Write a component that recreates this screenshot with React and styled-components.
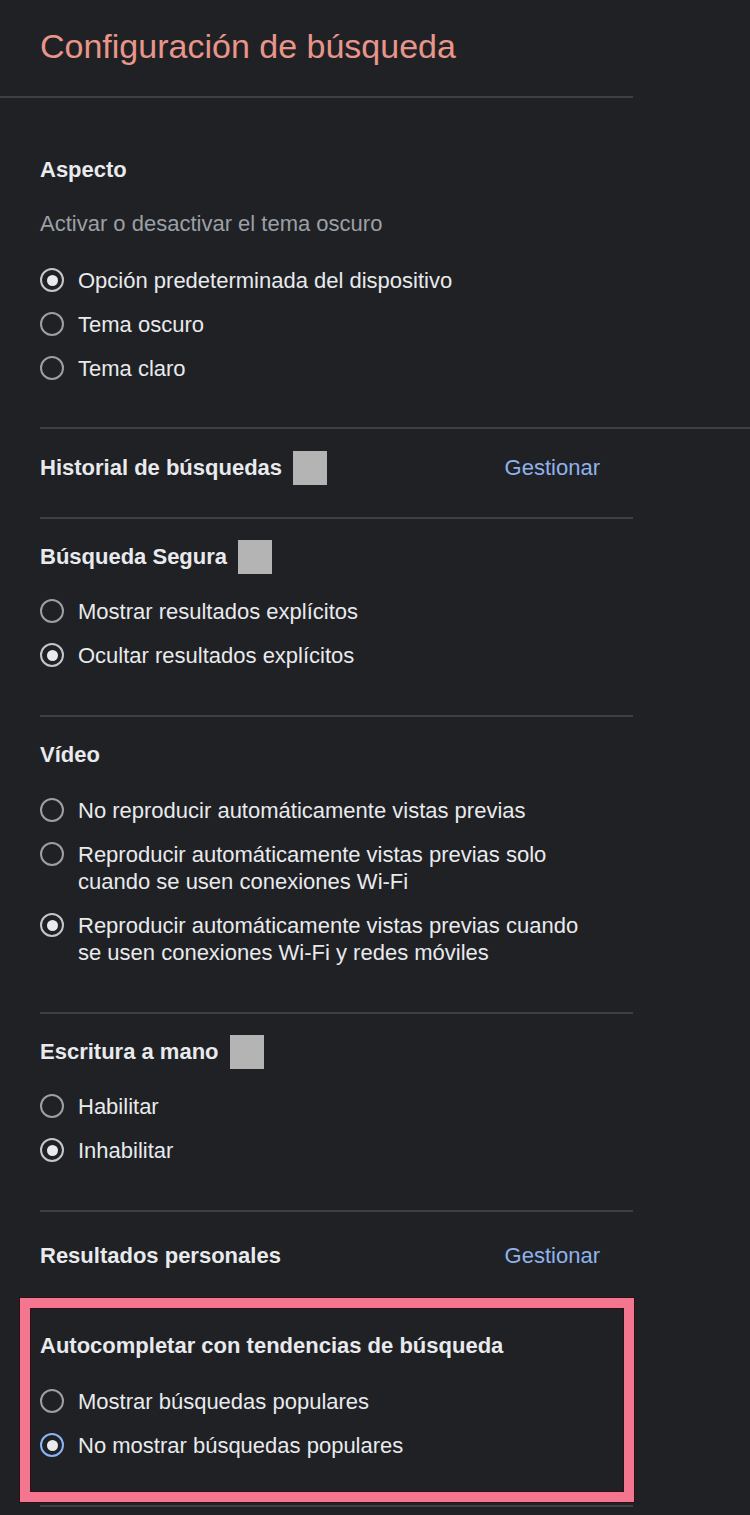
import React from "react";
import styled, { createGlobalStyle } from "styled-components";

const GlobalStyle = createGlobalStyle`
  html, body {
    margin: 0;
    padding: 0;
    background: #202124;
  }
  body {
    font-family: "Liberation Sans", Arial, sans-serif;
    color: #e8eaed;
  }
  #root {
    min-height: 1515px;
    background: #202124;
  }
  * { box-sizing: border-box; }
`;

const Page = styled.div`
  width: 633px;
  overflow: visible;
`;

const Header = styled.header`
  height: 96px;
  padding: 26px 0 0 40px;
`;

const Title = styled.h1`
  margin: 0;
  font-size: 34px;
  line-height: 40px;
  font-weight: 400;
  color: #e8958a;
`;

const Divider = styled.hr`
  margin: ${(p) => (p.$inset ? "0 0 0 40px" : "0")};
  margin-top: ${(p) => p.$mt || 0}px;
  margin-right: ${(p) => (p.$wide ? "-117px" : "0")};
  border: 0;
  height: 2px;
  background: #3c4043;
`;

const Content = styled.main`
  padding-left: 40px;
`;

const Section = styled.section`
  padding-top: ${(p) => p.$top}px;
  padding-bottom: ${(p) => p.$bottom}px;
`;

const HeadingRow = styled.div`
  display: flex;
  align-items: center;
  justify-content: ${(p) => (p.$spread ? "space-between" : "flex-start")};
  gap: 11px;
  min-height: 34px;
  padding-right: ${(p) => (p.$spread ? "33px" : "0")};
`;

const Heading = styled.h2`
  margin: 0;
  font-size: 22px;
  line-height: 28px;
  font-weight: 700;
  color: #e8eaed;
`;

const Placeholder = styled.span`
  display: inline-block;
  width: 34px;
  height: 34px;
  background: #b4b4b4;
`;

const ManageLink = styled.a`
  font-size: 22px;
  line-height: 28px;
  color: #8fb2ec;
  text-decoration: none;
  cursor: pointer;
`;

const Subtitle = styled.p`
  margin: 23px 0 0;
  font-size: 22px;
  line-height: 28px;
  color: #9aa0a6;
`;

const OptionList = styled.div`
  display: flex;
  flex-direction: column;
  margin-top: ${(p) => p.$mt}px;
`;

const Option = styled.label`
  display: flex;
  align-items: flex-start;
  gap: 14px;
  padding: 8.5px 0;
  cursor: pointer;
`;

const Radio = styled.span`
  flex: none;
  width: 24px;
  height: 24px;
  margin-top: 1.5px;
  border-radius: 50%;
  border: 2px solid ${(p) => (p.$focus ? "#8ab4f8" : p.$checked ? "#c4c7ca" : "#9aa0a6")};
  display: flex;
  align-items: center;
  justify-content: center;

  &::after {
    content: "";
    width: 11px;
    height: 11px;
    border-radius: 50%;
    background: #e8eaed;
    display: ${(p) => (p.$checked ? "block" : "none")};
  }
`;

const OptionText = styled.span`
  font-size: 22px;
  line-height: 27px;
  color: #e8eaed;
  max-width: 512px;
`;

const Highlight = styled.section`
  margin-left: -20px;
  width: 614px;
  border: 10px solid #f4758f;
  box-shadow: 0 0 0 1px rgba(60, 0, 10, 0.5), inset 0 0 0 1px rgba(60, 0, 10, 0.5);
  padding: 21px 0 25px 10px;
`;

function RadioGroup({ options, checked, mt = 15, focus }) {
  return (
    <OptionList $mt={mt} role="radiogroup">
      {options.map((o, i) => (
        <Option key={o}>
          <Radio $checked={i === checked} $focus={focus && i === checked} />
          <OptionText>{o}</OptionText>
        </Option>
      ))}
    </OptionList>
  );
}

export default function App() {
  return (
    <>
      <GlobalStyle />
      <Page>
        <Header>
          <Title>Configuración de búsqueda</Title>
        </Header>
        <Divider />
        <Content>
          <Section $top={55} $bottom={37}>
            <HeadingRow>
              <Heading>Aspecto</Heading>
            </HeadingRow>
            <Subtitle>Activar o desactivar el tema oscuro</Subtitle>
            <RadioGroup
              mt={20}
              checked={0}
              options={[
                "Opción predeterminada del dispositivo",
                "Tema oscuro",
                "Tema claro",
              ]}
            />
          </Section>
        </Content>
        <Divider $inset $wide />
        <Content>
          <Section $top={22} $bottom={32}>
            <HeadingRow $spread>
              <HeadingRow>
                <Heading>Historial de búsquedas</Heading>
                <Placeholder />
              </HeadingRow>
              <ManageLink>Gestionar</ManageLink>
            </HeadingRow>
          </Section>
        </Content>
        <Divider $inset />
        <Content>
          <Section $top={21} $bottom={38}>
            <HeadingRow>
              <Heading>Búsqueda Segura</Heading>
              <Placeholder />
            </HeadingRow>
            <RadioGroup
              checked={1}
              options={["Mostrar resultados explícitos", "Ocultar resultados explícitos"]}
            />
          </Section>
        </Content>
        <Divider $inset />
        <Content>
          <Section $top={21} $bottom={38}>
            <HeadingRow>
              <Heading>Vídeo</Heading>
            </HeadingRow>
            <RadioGroup
              mt={16}
              checked={2}
              options={[
                "No reproducir automáticamente vistas previas",
                "Reproducir automáticamente vistas previas solo cuando se usen conexiones Wi-Fi",
                "Reproducir automáticamente vistas previas cuando se usen conexiones Wi-Fi y redes móviles",
              ]}
            />
          </Section>
        </Content>
        <Divider $inset />
        <Content>
          <Section $top={21} $bottom={38}>
            <HeadingRow>
              <Heading>Escritura a mano</Heading>
              <Placeholder />
            </HeadingRow>
            <RadioGroup checked={1} options={["Habilitar", "Inhabilitar"]} />
          </Section>
        </Content>
        <Divider $inset />
        <Content>
          <Section $top={27} $bottom={25}>
            <HeadingRow $spread>
              <Heading>Resultados personales</Heading>
              <ManageLink>Gestionar</ManageLink>
            </HeadingRow>
          </Section>
          <Highlight>
            <HeadingRow>
              <Heading>Autocompletar con tendencias de búsqueda</Heading>
            </HeadingRow>
            <RadioGroup
              mt={16}
              checked={1}
              focus
              options={["Mostrar búsquedas populares", "No mostrar búsquedas populares"]}
            />
          </Highlight>
        </Content>
        <Divider $inset $mt={3} />
      </Page>
    </>
  );
}
